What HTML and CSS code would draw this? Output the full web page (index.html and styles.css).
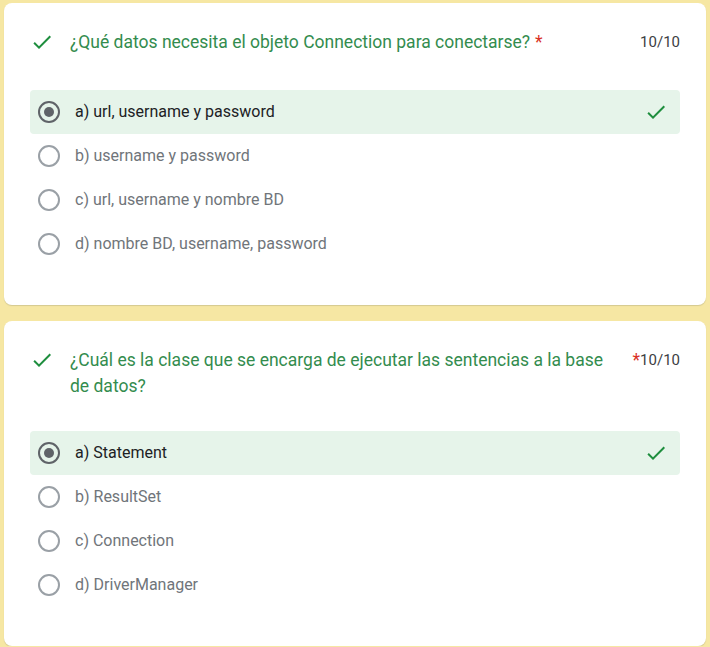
FILE: index.html
```html
<!DOCTYPE html>
<html lang="es">
<head>
<meta charset="utf-8">
<title>Quiz</title>
<link rel="stylesheet" href="styles.css">
</head>
<body>
<div class="page">
  <section class="card">
    <div class="head">
      <svg class="icon" viewBox="0 0 24 24"><path d="M9 16.17L4.83 12l-1.42 1.41L9 19 21 7l-1.41-1.41z"/></svg>
      <div class="title"><span class="qtext">¿Qué datos necesita el objeto Connection para conectarse?</span><span class="req">*</span></div>
      <div class="score">10/10</div>
    </div>
    <div class="options">
      <div class="opt sel"><span class="radio on"></span><span class="label">a) url, username y password</span><svg class="icon right" viewBox="0 0 24 24"><path d="M9 16.17L4.83 12l-1.42 1.41L9 19 21 7l-1.41-1.41z"/></svg></div>
      <div class="opt"><span class="radio"></span><span class="label">b) username y password</span></div>
      <div class="opt"><span class="radio"></span><span class="label">c) url, username y nombre BD</span></div>
      <div class="opt"><span class="radio"></span><span class="label">d) nombre BD, username, password</span></div>
    </div>
  </section>
  <section class="card">
    <div class="head">
      <svg class="icon" viewBox="0 0 24 24"><path d="M9 16.17L4.83 12l-1.42 1.41L9 19 21 7l-1.41-1.41z"/></svg>
      <div class="title wrap"><span class="qtext">¿Cuál es la clase que se encarga de ejecutar las sentencias a la base de datos?</span></div>
      <span class="req">*</span>
      <div class="score">10/10</div>
    </div>
    <div class="options">
      <div class="opt sel"><span class="radio on"></span><span class="label">a) Statement</span><svg class="icon right" viewBox="0 0 24 24"><path d="M9 16.17L4.83 12l-1.42 1.41L9 19 21 7l-1.41-1.41z"/></svg></div>
      <div class="opt"><span class="radio"></span><span class="label">b) ResultSet</span></div>
      <div class="opt"><span class="radio"></span><span class="label">c) Connection</span></div>
      <div class="opt"><span class="radio"></span><span class="label">d) DriverManager</span></div>
    </div>
  </section>
</div>
</body>
</html>
```
FILE: styles.css
```css
html, body {
  margin: 0;
  padding: 0;
}
body {
  background: #f6e7a3;
  font-family: Roboto, "Liberation Sans", Arial, sans-serif;
}
.page {
  padding: 3px 4px 0 4px;
  display: flex;
  flex-direction: column;
  gap: 16px;
}
.card {
  background: #fff;
  border-radius: 8px;
  padding: 26px 26px 39px 26px;
  box-shadow: 0 1px 1px rgba(60, 64, 67, 0.18);
}
.head {
  display: flex;
  align-items: flex-start;
  min-height: 29px;
  margin-bottom: 32px;
}
.icon {
  width: 24px;
  height: 24px;
  fill: #1e8e3e;
  flex: none;
}
.head .icon {
  margin-top: 1px;
}
.title {
  margin-left: 16px;
  font-size: 17.5px;
  line-height: 26px;
  color: #338c4e;
  flex: 0 1 auto;
}
.title.wrap {
  flex: 1 1 auto;
  padding-right: 12px;
}
.req {
  color: #d93025;
  font-size: 17.5px;
  line-height: 26px;
  margin-left: 5px;
}
.wrap + .req {
  margin-left: 0;
}
.score {
  margin-left: auto;
  font-size: 15px;
  line-height: 26px;
  color: #3c4043;
  flex: none;
}
.options {
  display: flex;
  flex-direction: column;
}
.opt {
  height: 44px;
  display: flex;
  align-items: center;
  padding: 0 12px 0 8px;
  border-radius: 4px;
}
.opt.sel {
  background: #e6f4ea;
}
.radio {
  width: 18px;
  height: 18px;
  border: 2px solid #9aa0a6;
  border-radius: 50%;
  flex: none;
  display: flex;
  align-items: center;
  justify-content: center;
}
.radio.on {
  border-color: #5f6368;
}
.radio.on::after {
  content: "";
  width: 10px;
  height: 10px;
  border-radius: 50%;
  background: #5f6368;
}
.label {
  margin-left: 15px;
  font-size: 16px;
  line-height: 20px;
  margin-top: -1px;
  color: #70757a;
}
.sel .label {
  color: #202124;
}
.icon.right {
  margin-left: auto;
}
```
